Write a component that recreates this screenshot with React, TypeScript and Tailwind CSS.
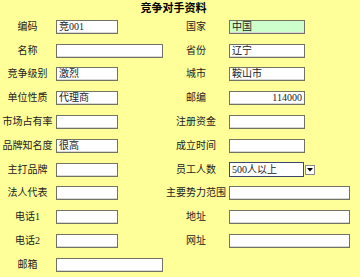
import React from 'react';

type Field = { label: string; value?: string; wide?: boolean; green?: boolean; right?: boolean; select?: boolean };

const rows: [Field, Field | null][] = [
  [{ label: '编码', value: '竞001' }, { label: '国家', value: '中国', green: true }],
  [{ label: '名称', wide: true }, { label: '省份', value: '辽宁' }],
  [{ label: '竞争级别', value: '激烈' }, { label: '城市', value: '鞍山市' }],
  [{ label: '单位性质', value: '代理商' }, { label: '邮编', value: '114000', right: true }],
  [{ label: '市场占有率' }, { label: '注册资金' }],
  [{ label: '品牌知名度', value: '很高' }, { label: '成立时间' }],
  [{ label: '主打品牌' }, { label: '员工人数', value: '500人以上', select: true }],
  [{ label: '法人代表' }, { label: '主要势力范围', wide: true }],
  [{ label: '电话1' }, { label: '地址', wide: true }],
  [{ label: '电话2' }, { label: '网址', wide: true }],
  [{ label: '邮箱', wide: true }, null],
];

const Box: React.FC<{ f: Field; side: 'l' | 'r' }> = ({ f, side }) => {
  const width = side === 'l' ? (f.wide ? 'w-[107px]' : 'w-[62px]') : f.wide ? 'w-[121px]' : 'w-[76px]';
  if (f.select) {
    return (
      <div className="flex items-center">
        <div className="w-[75px] h-[15px] border border-[#3c4670] bg-white pl-[2px] text-[10px] leading-[13px] text-[#222]">
          {f.value}
        </div>
        <div className="w-[10px] h-[10px] ml-[1px] border border-[#8a8a8a] bg-white flex items-center justify-center">
          <svg width="6" height="4" viewBox="0 0 6 4">
            <polygon points="0,0 6,0 3,3.5" fill="#000" />
          </svg>
        </div>
      </div>
    );
  }
  return (
    <div
      className={`${width} h-[14px] border border-[#737363] shadow-[inset_0_-1px_0_#d8d8d8] ${
        f.green ? 'bg-[#ccffcc]' : 'bg-white'
      } px-[2px] text-[10px] leading-[12px] text-[#222] ${f.right ? 'text-right' : ''} overflow-hidden whitespace-nowrap`}
    >
      {f.value}
    </div>
  );
};

export default function App() {
  return (
    <div
      className="w-[360px] h-[277px] bg-[#ffff99] text-[#222] overflow-hidden"
      style={{ fontFamily: '"Liberation Serif", "Noto Sans CJK SC", serif' }}
    >
      <div className="h-[15px] w-[347px] text-center text-[11px] font-bold leading-[16px] text-black">
        竞争对手资料
      </div>
      {rows.map(([l, r], i) => (
        <div key={i} className="h-[23.8px] flex items-center">
          <div className="w-[55px] text-center text-[10px] leading-[12px] whitespace-nowrap">{l.label}</div>
          <div className="w-[108px] pl-[1px]">
            <Box f={l} side="l" />
          </div>
          {r && (
            <>
              <div className="w-[66px] text-center text-[10px] leading-[12px] whitespace-nowrap">{r.label}</div>
              <div>
                <Box f={r} side="r" />
              </div>
            </>
          )}
        </div>
      ))}
    </div>
  );
}
